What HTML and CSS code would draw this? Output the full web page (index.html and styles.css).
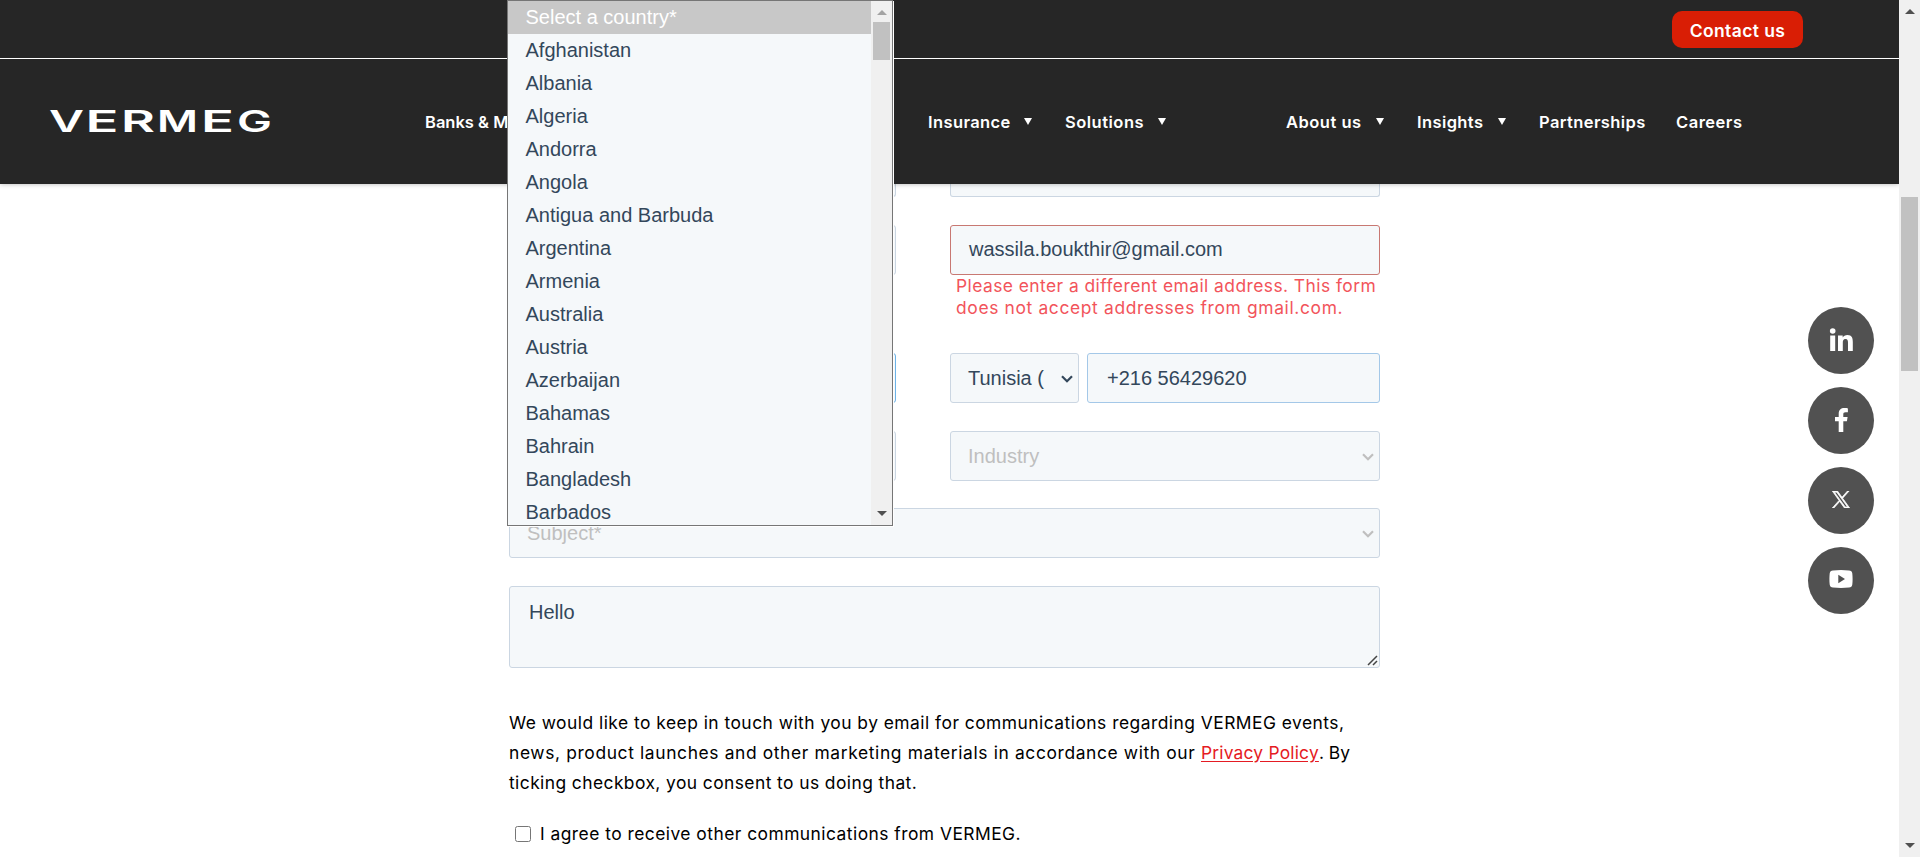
FILE: index.html
```html
<!DOCTYPE html>
<html lang="en">
<head>
<meta charset="utf-8">
<title>VERMEG</title>
<link rel="stylesheet" href="styles.css">
</head>
<body>
<div class="window">
  <div class="page">
    <header class="header">
      <div class="topbar"><a class="contact"><span class="contact-label">Contact us</span></a></div>
      <div class="navbar">
        <svg class="logo" width="230" height="44" viewBox="0 0 230 44"><text y="33"><tspan x="-1" textLength="35" lengthAdjust="spacingAndGlyphs">V</tspan><tspan x="35.500" textLength="33" lengthAdjust="spacingAndGlyphs">E</tspan><tspan x="71" textLength="34" lengthAdjust="spacingAndGlyphs">R</tspan><tspan x="107" textLength="41" lengthAdjust="spacingAndGlyphs">M</tspan><tspan x="151" textLength="33" lengthAdjust="spacingAndGlyphs">E</tspan><tspan x="187" textLength="35" lengthAdjust="spacingAndGlyphs">G</tspan></text></svg>
        <nav class="nav">
          <div class="nav-item nav-banks"><span>Banks &amp; M</span></div>
          <div class="nav-item nav-insurance"><span>Insurance</span><i class="caret"></i></div>
          <div class="nav-item nav-solutions"><span>Solutions</span><i class="caret"></i></div>
          <div class="nav-item nav-about"><span>About us</span><i class="caret"></i></div>
          <div class="nav-item nav-insights"><span>Insights</span><i class="caret"></i></div>
          <div class="nav-item nav-partners"><span>Partnerships</span></div>
          <div class="nav-item nav-careers"><span>Careers</span></div>
        </nav>
      </div>
    </header>
    <div class="content">
      <form class="form">
        <div class="row row-clipped"><div class="field"></div><div class="field"></div></div>
        <div class="row row-email">
          <div class="field"></div>
          <div>
            <div class="field field-error">wassila.boukthir@gmail.com</div>
            <div class="error"><div class="error-a">Please enter a different email address. This form</div><div class="error-b">does not accept addresses from gmail.com.</div></div>
          </div>
        </div>
        <div class="row">
          <div class="field field-focus"></div>
          <div class="phone">
            <div class="field select"><span>Tunisia (</span><svg class="chevron" width="12" height="8" viewBox="0 0 12 8"><path d="M1 1.200 6 6.200 11 1.200"/></svg></div>
            <div class="field field-tel">+216 56429620</div>
          </div>
        </div>
        <div class="row row-last">
          <div class="field"></div>
          <div class="field select muted"><span>Industry</span><svg class="chevron" width="12" height="8" viewBox="0 0 12 8"><path d="M1 1.200 6 6.200 11 1.200"/></svg></div>
        </div>
        <div class="field select muted subject"><span>Subject*</span><svg class="chevron" width="12" height="8" viewBox="0 0 12 8"><path d="M1 1.200 6 6.200 11 1.200"/></svg></div>
        <div class="field message"><span>Hello</span><svg class="grip" width="11" height="11" viewBox="0 0 11 11"><path d="M1 10 10 1M6 10 10 6"/></svg></div>
        <div class="legal">
          <div class="legal-a">We would like to keep in touch with you by email for communications regarding VERMEG events,</div>
          <div class="legal-b">news, product launches and other marketing materials in accordance with our <a>Privacy Policy</a><span class="legal-end">. By</span></div>
          <div class="legal-c">ticking checkbox, you consent to us doing that.</div>
        </div>
        <label class="consent"><input type="checkbox"><span>I agree to receive other communications from VERMEG.</span></label>
      </form>
      <div class="social">
        <a><svg width="24" height="24" viewBox="0 0 24 24"><circle cx="3.700" cy="3" r="2.800"/><path d="M1.200 7.400h5V23h-5zM9 7.400h4.700v2.100c.8-1.400 2.500-2.500 4.800-2.500 4.400 0 5.300 2.900 5.300 6.900V23H19v-8c0-2-.2-4-2.500-4s-2.700 1.800-2.700 3.800V23H9z"/></svg></a>
        <a><svg width="24" height="24" viewBox="0 0 24 24"><path d="M9.700 24V13.300H6V9h3.700V6c0-3.900 2.200-5.900 5.700-5.900 1.600 0 3.100.2 3.500.3v3.900h-2.300c-1.900 0-2.300.9-2.300 2.200V9h4.300l-.7 4.300h-3.600V24z"/></svg></a>
        <a><svg class="x" width="18" height="17" viewBox="0 0 24 24" preserveAspectRatio="none"><path fill-rule="evenodd" d="M14.200 10.200 22.800 0h-2.100l-7.400 8.800L7.300 0H.4l9 13.300L.4 24h2.100l7.800-9.300 6.300 9.300h6.900zm-2.800 3.300-.9-1.300L3.200 1.600h3.100l5.900 8.500.9 1.300 7.600 11.100h-3.100z"/></svg></a>
        <a class="yt"><svg width="24" height="18" viewBox="0 0 24 18"><path fill-rule="evenodd" d="M4 .4Q12-.3 20 .4q3 .2 3.300 3 .6 5.600 0 11.200-.3 2.800-3.300 3-8 .7-16 0-3-.2-3.300-3-.6-5.600 0-11.200Q1 .6 4 .4zM9.300 4.800v8.400L16 9z"/></svg></a>
      </div>
    </div>
    <div class="dropdown">
      <div class="options">
        <div class="option selected">Select a country*</div>
        <div class="option">Afghanistan</div><div class="option">Albania</div><div class="option">Algeria</div>
        <div class="option">Andorra</div><div class="option">Angola</div><div class="option">Antigua and Barbuda</div>
        <div class="option">Argentina</div><div class="option">Armenia</div><div class="option">Australia</div>
        <div class="option">Austria</div><div class="option">Azerbaijan</div><div class="option">Bahamas</div>
        <div class="option">Bahrain</div><div class="option">Bangladesh</div><div class="option">Barbados</div>
      </div>
      <div class="list-scroll"><i class="up faint"></i><div class="list-thumb"></div><i class="down"></i></div>
    </div>
  </div>
  <div class="scrollbar"><i class="up"></i><div class="thumb"></div><i class="down"></i></div>
</div>
</body>
</html>
```
FILE: styles.css
```css
* { box-sizing: border-box; }
body { margin: 0; background: #fff; overflow: hidden; }
.window { display: grid; grid-template-columns: 1899px 21px; height: 857px; overflow: hidden; }
.page { position: relative; height: 857px; overflow: hidden; font-family: Inter, sans-serif; }

.header { position: relative; height: 184px; background: #262626; box-shadow: 0 0 5px rgba(0, 0, 0, .3); color: #fff; }
.topbar { height: 59px; border-bottom: 1px solid #fff; display: flex; justify-content: flex-end; padding: 11px 96px 0 0; }
.contact { width: 131px; height: 37px; border-radius: 10px; background: #d91e05; display: flex; justify-content: center; font-size: 17.5px; line-height: 39px; font-weight: 600; letter-spacing: .4px; white-space: nowrap; }
.navbar { display: flex; height: 125px; padding: 50px 0 0 50px; }
.logo { flex: none; width: 230px; height: 44px; margin-top: -10px; overflow: visible; font: 600 30px Inter, sans-serif; fill: #fff; }
.nav { display: flex; margin-left: 145px; font-size: 16.5px; line-height: 26px; font-weight: 600; white-space: nowrap; letter-spacing: .4px; }
.nav-item { display: flex; justify-content: space-between; align-items: flex-start; flex: none; }
.nav-banks { width: 503px; letter-spacing: 0; }
.nav-insurance { width: 104px; margin-right: 33px; }
.nav-solutions { width: 101px; margin-right: 120px; letter-spacing: .5px; }
.nav-about { width: 98px; margin-right: 33px; letter-spacing: .5px; }
.nav-insights { width: 89px; margin-right: 33px; }
.nav-partners { width: 137px; }
.nav-careers { letter-spacing: .5px; }
.caret { margin-top: 9px; border: 4.5px solid transparent; border-top: 7px solid #fff; border-bottom: 0; }

.content { display: flex; align-items: flex-start; padding-left: 509px; }
.form { width: 871px; flex: none; }
.row { display: grid; grid-template-columns: 387px 430px; gap: 54px; margin-bottom: 28px; }
.row-email { height: 100px; }
.row-last { margin-bottom: 27px; }
.field { height: 50px; border: 1px solid #cbd6e2; border-radius: 3px; background: #f5f8fa; color: #33475b; font: 20px/48px "Liberation Sans", Arial, sans-serif; padding-left: 18px; white-space: nowrap; }
.row-clipped .field { height: 13px; border-top: 0; border-radius: 0 0 3px 3px; }
.field-error { border-color: #c87872; line-height: 46px; }
.field-focus { border-color: #6cb3e8; }
.error { padding: 0 0 0 6px; color: #f2545b; font-size: 17.4px; line-height: 22px; white-space: nowrap; }
.error-a { letter-spacing: .45px; }
.error-b { letter-spacing: .65px; }
.phone { display: grid; grid-template-columns: 129px 293px; gap: 8px; }
.field-tel { padding-left: 19px; border-color: #a4c8e8; }
.select { display: flex; justify-content: space-between; padding: 0 5px 0 17px; }
.muted { color: #bfbfbf; }
.chevron { margin-top: 21px; fill: none; stroke: currentColor; stroke-width: 2.2; }
.subject { margin-bottom: 28px; }
.message { height: 82px; display: flex; justify-content: space-between; align-items: flex-end; padding: 0 1px 1px 19px; line-height: 50px; }
.message span { align-self: flex-start; }
.grip { fill: none; stroke: #444; stroke-width: 1.5; }
.legal { padding-top: 40px; font-size: 17.4px; line-height: 30px; color: #000; white-space: nowrap; letter-spacing: .48px; }
.legal-b { letter-spacing: .63px; }
.legal-c { letter-spacing: .43px; }
.legal a { color: #e51b23; letter-spacing: .2px; text-decoration: underline; text-underline-offset: 2px; }
.legal-end { letter-spacing: 0; }
.consent { display: flex; align-items: center; margin-top: 21px; font-size: 17.4px; line-height: 30px; white-space: nowrap; letter-spacing: .47px; }
.consent input { width: 16px; height: 16px; margin: 0 9px 0 6px; }

.social { display: flex; flex-direction: column; gap: 13px; margin: 123px 0 0 428px; }
.social a { width: 66px; height: 67px; border-radius: 50%; background: #515151; display: flex; align-items: center; justify-content: center; padding-bottom: 2px; }
.social .yt { padding-bottom: 4px; }
.social svg { fill: #fff; }
.social .x { stroke: #fff; stroke-width: 1px; }

.dropdown { position: absolute; left: 507px; top: 0; width: 386px; height: 526px; border: 1px solid #767676; box-shadow: 1px 1px 0 #fff; background: #f5f8fa; display: flex; overflow: hidden; }
.options { width: 363px; }
.option { height: 33px; padding-left: 17.5px; font: 20px/32px "Liberation Sans", Arial, sans-serif; color: #33475b; white-space: nowrap; }
.selected { background: #c8c8c8; color: #fff; }
.list-scroll { width: 21px; background: #f0f0f0; display: flex; flex-direction: column; align-items: center; padding: 9px 0; }
.list-thumb { width: 17px; height: 38px; margin-top: 7px; background: #c1c1c1; }
.up { border: 5px solid transparent; border-bottom-color: #505050; border-top: 0; }
.up.faint { border-bottom-color: #a3a3a3; }
.down { margin-top: auto; border: 5px solid transparent; border-top-color: #505050; border-bottom: 0; }
.scrollbar { background: #f0f0f0; display: flex; flex-direction: column; align-items: center; padding: 9px 0; }
.thumb { width: 17px; height: 174px; margin-top: 183px; background: #c1c1c1; }
```
